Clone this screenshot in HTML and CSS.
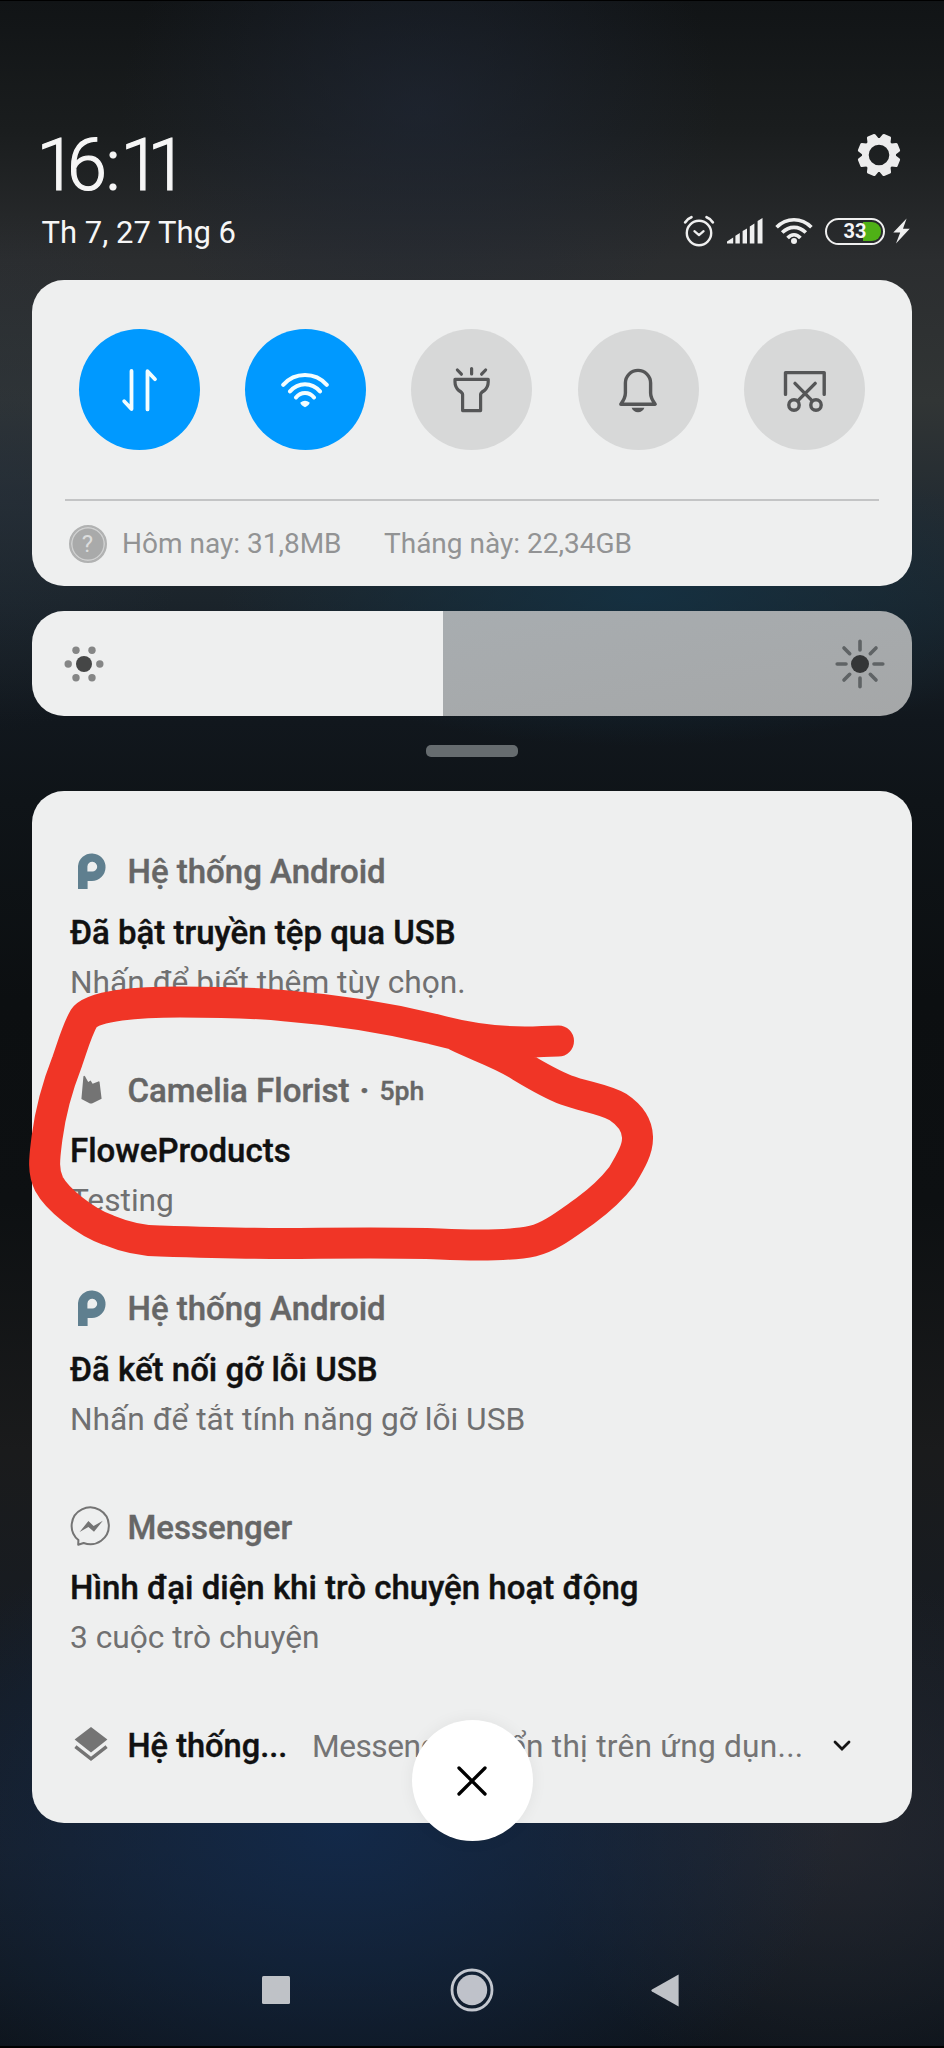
FILE: index.html
```html
<!DOCTYPE html>
<html lang="vi">
<head>
<meta charset="utf-8">
<title>Notifications</title>
<link rel="stylesheet" href="styles.css">
</head>
<body>
<div class="screen">
  <header class="top">
    <div class="clock">
      <div class="time"><span class="t1">1</span><span class="t6">6</span>:<span class="t2">1</span>1</div>
      <div class="date">Th 7, 27 Thg 6</div>
    </div>
    <div class="tray">
      <svg class="gear" viewBox="-22 -22 44 44" width="44" height="44">
        <g fill="#ececec">
          <path fill-rule="evenodd" d="M0-17A17 17 0 1 1 0 17A17 17 0 1 1 0-17ZM0-10.3A10.3 10.3 0 1 0 0 10.3A10.3 10.3 0 1 0 0-10.3Z"/>
          <g id="teeth" transform="rotate(22.5)">
            <path id="tooth" d="M-6.4-14L-4.6-20.4Q-4.2-21.4-3.2-21.4H3.2Q4.2-21.4 4.6-20.4L6.4-14Z"/>
            <use href="#tooth" transform="rotate(45)"/><use href="#tooth" transform="rotate(90)"/><use href="#tooth" transform="rotate(135)"/><use href="#tooth" transform="rotate(180)"/><use href="#tooth" transform="rotate(225)"/><use href="#tooth" transform="rotate(270)"/><use href="#tooth" transform="rotate(315)"/>
          </g>
        </g>
      </svg>
      <div class="status">
        <svg width="32" height="32" viewBox="0 0 32 32" fill="none" stroke="#efefef" stroke-width="2.4" stroke-linecap="round" stroke-linejoin="round"><circle cx="16" cy="18" r="12.2"/><path d="M11.4 16.2L16 20.2L20.6 16.2" stroke-width="2.2"/><path d="M2.2 7.4Q4.4 3.6 8.4 2.2M29.8 7.4Q27.6 3.6 23.6 2.2" stroke-width="2.8"/></svg>
        <svg width="36" height="28" viewBox="0 0 36 28" fill="#efefef"><path d="M0 26.5V24.6L6.2 20.4V26.5ZM8.4 26.5V18.8L12.8 16V26.5ZM15.6 26.5V14L20 11.4V26.5ZM22.8 26.5V9.6L27.4 6.6V26.5ZM30.6 26.5V4L35.5 1V26.5Z"/></svg>
        <svg width="38" height="28" viewBox="0 0 38 28" fill="none" stroke="#efefef" stroke-width="3.6"><path d="M1.6 10.2Q9 2.7 19 2.7T36.4 10.2M7.2 15.6Q12.4 10.4 19 10.4T30.8 15.6M12.6 21Q15.4 17.8 19 17.8T25.4 21"/><circle cx="19" cy="24" r="3" fill="#efefef" stroke="none"/></svg>
        <span class="battery"><span class="level">33</span></span>
        <svg width="17" height="26" viewBox="0 0 17 26" fill="#efefef"><path d="M13.6 0.5L0.3 14.4H7.2L3 25.4L16.7 10.8H10Z"/></svg>
      </div>
    </div>
  </header>

  <section class="card quick">
    <div class="toggles">
      <div class="toggle on"><svg viewBox="0 0 48 48" fill="none" stroke="#f3fdff" stroke-width="3.8" stroke-linecap="round" stroke-linejoin="round"><path d="M16.5 5V43L9.2 35.2" /><path d="M32.5 43.4V5.2L40 13.2"/></svg></div>
      <div class="toggle on"><svg viewBox="0 0 48 48" fill="none" stroke="#f3fdff" stroke-width="4" stroke-linecap="round"><path d="M2.2 18.8Q11 9 24 9T45.8 18.8M9 25.4Q15.2 18.2 24 18.2T39 25.4M15 31.4Q18.6 27 24 27T33 31.4"/><path d="M19.4 36.6Q24 33 28.6 36.6Q29 38.8 24 41.2Q19 38.8 19.4 36.6Z" fill="#f3fdff" stroke="none"/></svg></div>
      <div class="toggle"><svg viewBox="0 0 48 48" fill="none" stroke="#555657" stroke-width="3.2" stroke-linecap="round" stroke-linejoin="round"><path d="M7 13.3H40.2V16Q40.2 21 36.4 24.5Q32.6 26.6 32.6 28.5V44.6H14.6V28.5Q14.6 26.6 10.8 24.5Q7 21 7 16ZM23.6 2.6V8M9.4 4L13.4 8.2M37.6 4L33.6 8.2"/></svg></div>
      <div class="toggle"><svg viewBox="0 0 48 48" fill="none" stroke="#555657" stroke-width="3.4" stroke-linejoin="round"><path d="M6.8 38.2Q11.4 32 11.4 27V17A12.6 12.6 0 0 1 36.6 17V27Q36.6 32 41.2 38.2Z"/><path d="M17.6 41.8H30.4Q28.6 46.2 24 46.2T17.6 41.8Z" fill="#555657" stroke="none"/></svg></div>
      <div class="toggle"><svg viewBox="0 0 48 48" fill="none" stroke="#555657" stroke-width="3.4" stroke-linecap="round" stroke-linejoin="round"><path d="M4.5 28.4V6.6H43.2V28.4M14 17.4L31 34.6M34.2 17.4L17 34.6"/><circle cx="13" cy="39" r="5.2"/><circle cx="35" cy="39" r="5.2"/></svg></div>
    </div>
    <div class="usage">
      <span class="help"><span class="mark">?</span></span>
      <span class="today">Hôm nay: 31,8MB</span>
      <span class="month">Tháng này: 22,34GB</span>
    </div>
  </section>

  <section class="card brightness">
    <svg width="40" height="40" viewBox="-20 -20 40 40"><circle r="8" fill="#454646"/><g fill="#858686"><circle cx="-15.8" r="3.7"/><circle cx="15.8" r="3.7"/><circle cx="-8" cy="-13.7" r="3.7"/><circle cx="8" cy="-13.7" r="3.7"/><circle cx="-8" cy="13.7" r="3.7"/><circle cx="8" cy="13.7" r="3.7"/></g></svg>
    <svg width="50" height="50" viewBox="-25 -25 50 50"><circle r="9" fill="#343637"/><path d="M0-22.8V-14M0 22.8V14M-22.8 0H-14M22.8 0H14M-16-16L-10.3-10.3M16 16L10.3 10.3M-16 16L-10.3 10.3M16-16L10.3-10.3" stroke="#5f6365" stroke-width="3.6" stroke-linecap="round"/></svg>
  </section>

  <div class="handle"></div>

  <main class="card list">
    <article class="note">
      <div class="app"><svg class="ico" viewBox="0 0 42 42"><path fill="#5f7f8f" fill-rule="evenodd" d="M8 38V15A13.8 13.8 0 1 1 21.8 30H17.6V38ZM17.4 20.6H22A4.9 4.9 0 1 0 17.4 15.5Z"/></svg><span>Hệ thống Android</span></div>
      <h2>Đã bật truyền tệp qua USB</h2>
      <p>Nhấn để biết thêm tùy chọn.</p>
    </article>
    <article class="note">
      <div class="app"><svg class="ico" viewBox="0 0 42 42"><path fill="#747474" d="M13.4 7.4Q14 6.2 15 7.2L18.2 13L20.6 11.6L22.6 14.8L28.4 12.4Q29.4 12 29.6 13.2L31.6 29.8L22 34.4Q21 34.8 20 34.4L11.4 30Z"/></svg><span>Camelia Florist</span><b class="dot">·</b><small>5ph</small></div>
      <h2>FloweProducts</h2>
      <p>Testing</p>
    </article>
    <article class="note">
      <div class="app"><svg class="ico" viewBox="0 0 42 42"><path fill="#5f7f8f" fill-rule="evenodd" d="M8 38V15A13.8 13.8 0 1 1 21.8 30H17.6V38ZM17.4 20.6H22A4.9 4.9 0 1 0 17.4 15.5Z"/></svg><span>Hệ thống Android</span></div>
      <h2>Đã kết nối gỡ lỗi USB</h2>
      <p>Nhấn để tắt tính năng gỡ lỗi USB</p>
    </article>
    <article class="note">
      <div class="app"><svg class="ico" viewBox="0 0 42 42"><path fill="none" stroke="#747474" stroke-width="2" stroke-linejoin="round" d="M8.4 34A18.6 18.4 0 1 1 13.6 37L8.2 38.8Z"/><path fill="#747474" d="M9.6 26L18.4 15L23.6 20L32.8 14.8L24 25.8L18.4 21Z"/></svg><span>Messenger</span></div>
      <h2>Hình đại diện khi trò chuyện hoạt động</h2>
      <p>3 cuộc trò chuyện</p>
    </article>
    <div class="mini">
      <svg class="ico" viewBox="0 0 42 42"><path fill="#747474" d="M21 2L37.4 14.6L21 27.4L4.6 14.6Z"/><path fill="none" stroke="#747474" stroke-width="3.4" d="M5.4 21.6L21 33.8L36.6 21.6"/></svg>
      <strong>Hệ thống...</strong>
      <span class="summary"><span class="lead">Messenger: H</span>iển thị trên ứng dụn...</span>
      <svg class="chev" width="18" height="12" viewBox="0 0 18 12"><path d="M2 2L9 9L16 2" fill="none" stroke="#151515" stroke-width="2.8" stroke-linecap="round"/></svg>
    </div>
    <div class="close"><svg width="32" height="32" viewBox="0 0 32 32"><path d="M3 3L29 29M29 3L3 29" stroke="#000" stroke-width="3.3" stroke-linecap="round"/></svg></div>
  </main>

  <nav class="nav">
    <svg width="28" height="28" viewBox="0 0 28 28"><rect width="28" height="28" rx="1.5" fill="#bfc2c7"/></svg>
    <svg class="home" width="44" height="44" viewBox="-22 -22 44 44"><circle r="20" fill="none" stroke="#c3c7cf" stroke-width="2.8"/><circle r="15.2" fill="#bfc2ca"/></svg>
    <svg width="28" height="33" viewBox="0 0 28 33"><path d="M27.6 .5V32.5L1 17.4Q-.4 16.5 1 15.6Z" fill="#bfc2c7"/></svg>
  </nav>

  <svg class="scribble" viewBox="0 0 944 2048" width="944" height="2048"><path d="M558.5 1041C545 1041 540 1042 525 1042C490 1042 462 1037 433 1029C400 1021 350 1011 287 1006C250 1002 215 1002 180 1002C140 1002 93 1005 84 1018C77 1030 73 1045 67 1062C56 1090 50 1115 47 1138C45 1155 42 1170 49 1184C57 1199 85 1222 108 1230C125 1237 142 1241 160 1241C220 1243 250 1244 300 1243.5S400 1242.5 440 1244C480 1246 510 1246 533 1241C550 1237 565 1225 585 1211C600 1200 612 1189 622 1176C631 1161 638 1149 637.5 1137C637 1124 630 1115 618 1107C604 1099 585 1097 566 1090C548 1083 532 1073 517 1064C497 1052 475 1045 457 1036"/></svg>
</div>
</body>
</html>
```
FILE: styles.css
```css
* { box-sizing: border-box; }

body {
  margin: 0;
  background: #0f1317;
  font-family: Roboto, "Liberation Sans", sans-serif;
}

.screen {
  position: relative;
  width: 944px;
  height: 2048px;
  overflow: hidden;
  display: flex;
  flex-direction: column;
  padding: 0 32px 0 31.5px;
  border-top: 1px solid #000;
  border-bottom: 2px solid #000;
  background:
    radial-gradient(ellipse 500px 320px at 340px 1830px, rgba(18, 42, 76, .9), transparent),
    radial-gradient(ellipse 300px 260px at 830px 1830px, rgba(42, 43, 50, .65), transparent),
    radial-gradient(ellipse 420px 150px at 640px 595px, rgba(20, 50, 68, .85), transparent),
    radial-gradient(ellipse 300px 260px at 420px 110px, rgba(32, 40, 56, .6), transparent),
    radial-gradient(ellipse 200px 260px at 0 470px, rgba(38, 48, 60, .45), transparent),
    linear-gradient(#111416 0, #1a1d1e 130px, #2b2d2f 260px, #313535 400px, #242c32 500px, #1b242b 600px, #11171d 720px, #0f1418 800px, #0c0f11 1000px, #0d1012 1200px, #1a1b1c 1450px, #161c24 1700px, #171e28 1850px, #111820 1980px, #0e141b 2048px);
}

.top {
  height: 279px;
  padding: 129px 0 0 10px;
  display: flex;
  justify-content: space-between;
  color: #f6f6f6;
}

.time {
  margin-left: -5px;
  font-size: 72px;
  font-weight: 300;
  line-height: 72px;
  -webkit-text-stroke: 1.2px #f6f6f6;
}

.t1 { letter-spacing: -9.5px; }
.t6 { letter-spacing: -1.5px; }
.t2 { letter-spacing: -13px; }

.date {
  margin-top: 11px;
  font-size: 31px;
  line-height: 40px;
}

.tray {
  display: flex;
  flex-direction: column;
  align-items: flex-end;
}

.gear { margin: 3px 11.5px 0 0; }

.status {
  display: flex;
  align-items: center;
  height: 34px;
  margin: 37px 2px 0 0;
  gap: 12px;
}

.battery {
  width: 60px;
  height: 27px;
  border: 2.6px solid #efefef;
  border-radius: 14px;
  padding: 2px;
  display: flex;
  margin-right: -4px;
}

.level {
  flex: 1;
  border-radius: 0 9px 9px 0;
  background: linear-gradient(90deg, transparent 66%, #4fb016 66%);
  font-size: 20px;
  font-weight: 700;
  line-height: 18px;
  text-align: center;
}

.card {
  border-radius: 32px;
  background: #eeefef;
}

.quick {
  height: 306px;
  padding: 49px 33px 0;
}

.toggles {
  display: flex;
  justify-content: space-between;
  height: 171.5px;
  padding: 0 14px;
  border-bottom: 2px solid #c3c4c5;
}

.toggle {
  width: 121px;
  height: 121px;
  border-radius: 50%;
  background: #d7d8d8;
  display: grid;
  place-items: center;
}

.toggle svg { width: 48px; height: 48px; }
.toggle.on { background: #0099ff; }

.usage {
  display: flex;
  align-items: center;
  height: 86px;
  padding-left: 4px;
  font-size: 28px;
  color: #929394;
}

.help {
  width: 38px;
  height: 38px;
  border-radius: 50%;
  border: 2px solid #b1b2b2;
  background: #a9aaaa;
  box-shadow: inset 0 0 0 1.5px #d0d1d1;
  display: grid;
  place-items: center;
}

.mark { font-size: 24px; line-height: 26px; color: #dcdddd; }
.today { margin-left: 15.5px; width: 262px; }

.usage, .summary, .note p { white-space: nowrap; }

.brightness {
  margin-top: 25px;
  height: 105px;
  padding: 0 27px 0 32px;
  display: flex;
  align-items: center;
  justify-content: space-between;
  background: linear-gradient(90deg, #eeefef 410.5px, transparent 410.5px), linear-gradient(170deg, #a9afb3, #a5a7a8);
}

.handle {
  width: 92px;
  height: 12px;
  margin: 29px auto 34px;
  border-radius: 5px;
  background: #666c6f;
}

.list {
  position: relative;
  height: 1032px;
  padding: 50.5px 37px 0 38.5px;
}

.note { margin-bottom: 57.5px; }

.app {
  display: flex;
  align-items: center;
  height: 60px;
  font-size: 33px;
  font-weight: 500;
  color: #666;
  -webkit-text-stroke: .4px #666;
}

.ico { width: 42px; height: 42px; margin-right: 15.5px; flex: none; }
.app .ico, .mini .ico { -webkit-text-stroke: 0; }
.dot { margin: 0 10px; }
.app small { font-size: 26.6px; }

.note h2 {
  margin: 0;
  font-size: 33px;
  line-height: 61px;
  font-weight: 500;
  color: #111;
  -webkit-text-stroke: .4px #111;
  white-space: nowrap;
}

.note p {
  margin: 0;
  font-size: 31.7px;
  line-height: 40px;
  color: #707071;
}

.mini {
  display: flex;
  align-items: center;
  height: 61px;
  font-size: 31.7px;
  color: #747475;
}

.mini strong {
  width: 184.5px;
  font-size: 32.6px;
  font-weight: 500;
  color: #111;
  -webkit-text-stroke: .4px #111;
}

.lead { letter-spacing: -.5px; }
.summary { letter-spacing: .24px; }
.chev { margin-left: auto; margin-right: 24px; }

.close {
  position: absolute;
  left: 380px;
  bottom: -18px;
  width: 121px;
  height: 121px;
  border-radius: 50%;
  background: #fff;
  box-shadow: 0 0 16px rgba(0, 0, 0, .06);
  display: grid;
  place-items: center;
}

.nav {
  display: flex;
  align-items: center;
  height: 60px;
  margin-top: 137px;
  padding: 0 233.5px 0 230.5px;
  justify-content: space-between;
}

.home { margin-left: 3px; }

.scribble {
  position: absolute;
  left: 0;
  top: -1px;
  fill: none;
  stroke: #f03526;
  stroke-width: 31;
  stroke-linecap: round;
  stroke-linejoin: round;
}
```
